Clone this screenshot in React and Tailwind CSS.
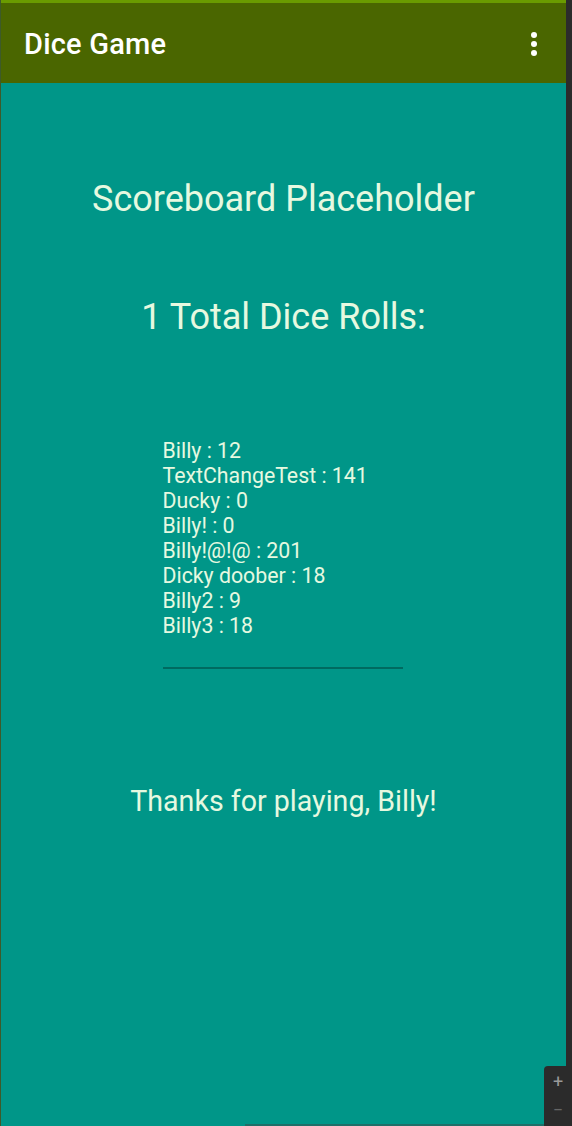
export default function App() {
  const scores = [
    "Billy : 12",
    "TextChangeTest : 141",
    "Ducky : 0",
    "Billy! : 0",
    "Billy!@!@ : 201",
    "Dicky doober : 18",
    "Billy2 : 9",
    "Billy3 : 18",
  ];
  return (
    <div className="relative w-[572px] h-[1126px] overflow-hidden bg-[#2b2b2b] flex" style={{ fontFamily: "Roboto, 'Liberation Sans', sans-serif" }}>
      <div className="w-[566px] h-full flex flex-col border-l border-[#3d5a2a]">
        <div className="h-[3px] bg-[#6a9b00]" />
        <div className="h-[80px] bg-[#4a6600] flex items-center justify-between pl-[23px] pr-[28px]">
          <span className="text-[29px] font-medium text-white tracking-[0.2px] mt-[3px]">Dice Game</span>
          <svg width="8" height="26" viewBox="0 0 8 26" className="mt-[1px]">
            <circle cx="4" cy="4" r="3" fill="white" />
            <circle cx="4" cy="13" r="3" fill="white" />
            <circle cx="4" cy="22" r="3" fill="white" />
          </svg>
        </div>
        <div className="flex-1 bg-[#009688] flex flex-col items-center text-[#e6f9e0] relative">
          <div className="mt-[96px] text-[36px] leading-[40px]">Scoreboard Placeholder</div>
          <div className="mt-[78px] text-[36px] leading-[40px]">1 Total Dice Rolls:</div>
          <div className="mt-[101px] w-[240px] ml-[-2px]">
            <div className="text-[21.3px] leading-[25px]">
              {scores.map((s) => (
                <div key={s}>{s}</div>
              ))}
            </div>
            <div className="mt-[29px] h-[2px] bg-[#006a60]" />
          </div>
          <div className="mt-[116px] text-[28.6px] leading-[32px]">Thanks for playing, Billy!</div>
          <div className="absolute bottom-0 left-[244px] right-0 h-[2px] bg-[#1e6f68]" />
        </div>
      </div>
      <div className="absolute right-0 bottom-0 w-[28px] h-[60px] bg-[#2b2b2b] rounded-tl-[4px] flex flex-col items-center justify-center gap-[10px] text-[#9a9a9a]">
        <span className="text-[18px] leading-[18px]">+</span>
        <span className="text-[18px] leading-[18px] text-[#666]">−</span>
      </div>
    </div>
  );
}
